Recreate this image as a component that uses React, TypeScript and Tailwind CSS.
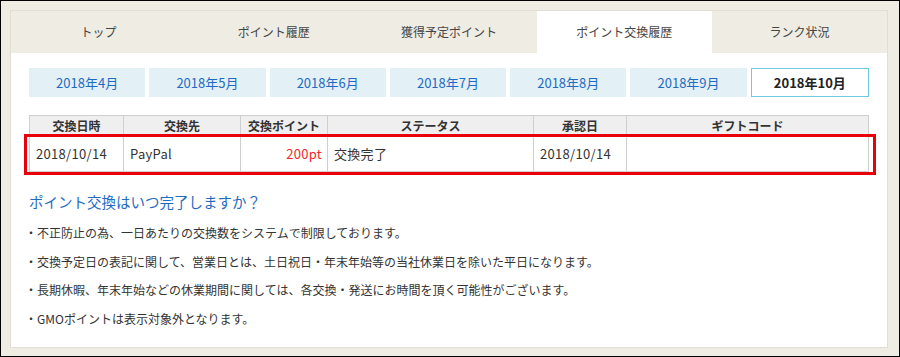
const tabs = ["トップ", "ポイント履歴", "獲得予定ポイント", "ポイント交換履歴", "ランク状況"];
const months = ["2018年4月", "2018年5月", "2018年6月", "2018年7月", "2018年8月", "2018年9月", "2018年10月"];
const cols = [
  { label: "交換日時", w: "w-[94px]" },
  { label: "交換先", w: "w-[117px]" },
  { label: "交換ポイント", w: "w-[87px]" },
  { label: "ステータス", w: "w-[206px]" },
  { label: "承認日", w: "w-[93px]" },
  { label: "ギフトコード", w: "" },
];
const notes = [
  "・不正防止の為、一日あたりの交換数をシステムで制限しております。",
  "・交換予定日の表記に関して、営業日とは、土日祝日・年末年始等の当社休業日を除いた平日になります。",
  "・長期休暇、年末年始などの休業期間に関しては、各交換・発送にお時間を頂く可能性がございます。",
  "・GMOポイントは表示対象外となります。",
];

export default function App() {
  return (
    <div
      className="w-[900px] h-[357px] border border-black bg-[#efece3] pt-[9px] pl-[9px] text-[#333]"
      style={{ fontFamily: '"Noto Sans CJK JP", "Liberation Sans", sans-serif' }}
    >
      <div className="w-[878px] h-[338px] border border-[#e2ded3] bg-white">
        <div className="flex h-[42px] bg-[#efece3]">
          {tabs.map((t, i) => (
            <div
              key={t}
              className={
                "flex-1 flex items-center justify-center text-[12px] text-[#444] " +
                (i === 3 ? "bg-white" : "")
              }
            >
              {t}
            </div>
          ))}
        </div>

        <div className="px-[18px]">
          <div className="flex gap-[4px] mt-[15px]">
            {months.map((m, i) =>
              i === 6 ? (
                <div
                  key={m}
                  className="flex-1 h-[29px] flex items-center justify-center border border-[#6dcbe0] text-[13px] font-bold text-[#222]"
                >
                  {m}
                </div>
              ) : (
                <div
                  key={m}
                  className="flex-1 h-[29px] flex items-center justify-center bg-[#e3f0f5] text-[13px] text-[#1f6bc4]"
                >
                  {m}
                </div>
              )
            )}
          </div>

          <div className="relative mt-[18px]">
            <table className="w-full table-fixed border-collapse text-[13px]">
              <thead>
                <tr className="h-[20px] bg-[#efefef]">
                  {cols.map((c) => (
                    <th
                      key={c.label}
                      className={"border border-[#cfcfcf] font-bold text-[12px] text-[#333] leading-none " + c.w}
                    >
                      {c.label}
                    </th>
                  ))}
                </tr>
              </thead>
              <tbody>
                <tr className="h-[36px] tracking-[0.3px]">
                  <td className="border border-[#cfcfcf] px-[6px]">2018/10/14</td>
                  <td className="border border-[#cfcfcf] px-[6px]">PayPal</td>
                  <td className="border border-[#cfcfcf] px-[5px] text-right text-[#f0282d]">200pt</td>
                  <td className="border border-[#cfcfcf] px-[6px]">交換完了</td>
                  <td className="border border-[#cfcfcf] px-[6px]">2018/10/14</td>
                  <td className="border border-[#cfcfcf] px-[6px]"></td>
                </tr>
              </tbody>
            </table>
            <div className="absolute left-[-5px] right-[-7px] top-[19px] h-[41px] border-[3px] border-[#e8000b] pointer-events-none" />
          </div>

          <h2 className="mt-[19px] text-[14.5px] text-[#1f6bc4] leading-[22px]">ポイント交換はいつ完了しますか？</h2>
          <ul className="mt-[6px] text-[12px] text-[#333] -ml-[4px]">
            {notes.map((n) => (
              <li key={n} className="leading-[28.5px]">
                {n}
              </li>
            ))}
          </ul>
        </div>
      </div>
    </div>
  );
}
